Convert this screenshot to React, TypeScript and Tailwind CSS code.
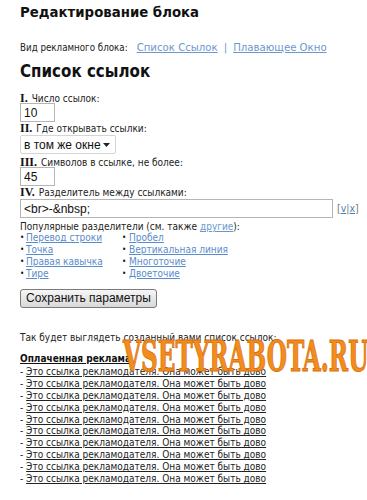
import React from "react";

function Num({ n }: { n: string }) {
  return (
    <b className="font-['Liberation_Serif',serif] text-[12px] leading-[12px] font-bold text-[#111] mr-[4px]">{n}</b>
  );
}

export default function App() {
  const rows = Array.from({ length: 10 });
  const seps: [string, string][] = [
    ["Перевод строки", "Пробел"],
    ["Точка", "Вертикальная линия"],
    ["Правая кавычка", "Многоточие"],
    ["Тире", "Двоеточие"],
  ];
  const label = "h-[12px] leading-[12px] whitespace-nowrap";
  return (
    <div className="relative w-[367px] h-[500px] overflow-hidden bg-white text-[#222] font-['DejaVu_Sans_Condensed',sans-serif] text-[10px] pl-[20px]">
      <h1 className="pt-[2px] text-[14.8px] leading-[20px] font-bold text-[#111]">Редактирование блока</h1>
      <div className="mt-[19px] h-[14px] leading-[14px] flex items-baseline whitespace-nowrap">
        <span className="text-[9.7px]">Вид рекламного блока:</span>
        <a className="ml-[9px] text-[11.3px] text-[#6b98cc] underline">Список Ссылок</a>
        <span className="mx-[6px] text-[11.3px] text-[#6b98cc]">|</span>
        <a className="text-[11.3px] text-[#6b98cc] underline">Плавающее Окно</a>
      </div>
      <h2 className="mt-[5px] h-[22px] text-[16.8px] leading-[22px] font-bold text-[#111]">Список ссылок</h2>

      <div className={"mt-[10px] " + label}><Num n="I." />Число ссылок:</div>
      <div className="mt-[-1px] w-[35px] h-[19px] border border-[#b5b5b5] bg-white flex items-center px-[3px] font-['Liberation_Sans',sans-serif] text-[12px] text-[#111]">10</div>

      <div className={"mt-[0px] " + label}><Num n="II." />Где открывать ссылки:</div>
      <div className="mt-[1px] w-[96px] h-[19px] border border-[#d4d4d4] rounded-[2px] bg-white flex items-center justify-between pl-[3px] pr-[5px] font-['Liberation_Sans',sans-serif] text-[12px] text-[#111] whitespace-nowrap">
        <span>в том же окне</span>
        <svg width="7" height="4" viewBox="0 0 7 4"><path d="M0 0h7L3.5 4z" fill="#222" /></svg>
      </div>

      <div className={"mt-[2px] " + label}><Num n="III." />Символов в ссылке, не более:</div>
      <div className="mt-[-1px] w-[35px] h-[19px] border border-[#b5b5b5] bg-white flex items-center px-[3px] font-['Liberation_Sans',sans-serif] text-[12px] text-[#111]">45</div>

      <div className={"mt-[0px] " + label}><Num n="IV." />Разделитель между ссылками:</div>
      <div className="mt-[1px] flex items-center">
        <div className="w-[313px] h-[19px] border border-[#b5b5b5] bg-white flex items-center px-[3px] font-['Liberation_Sans',sans-serif] text-[12px] text-[#111]">&lt;br&gt;-&amp;nbsp;</div>
        <span className="ml-[4px] text-[10.5px] text-[#777]">[<a className="text-[#4f7fb5] underline">v</a>|<a className="text-[#4f7fb5] underline">x</a>]</span>
      </div>

      <div className={"mt-[3px] " + label}>Популярные разделители (см. также <a className="text-[#6b98cc] underline">другие</a>):</div>
      <div className="mt-[-1px] grid grid-cols-[102px_1fr] leading-[12px]">
        {seps.map(([a, b], i) => (
          <React.Fragment key={i}>
            <div className="flex items-center h-[12px]">
              <span className="w-[6px] text-[8px] text-[#111]">•</span>
              <a className="text-[#5a8ccc] underline">{a}</a>
            </div>
            <div className="flex items-center h-[12px]">
              <span className="w-[7px] text-[8px] text-[#111]">•</span>
              <a className="text-[#5a8ccc] underline">{b}</a>
            </div>
          </React.Fragment>
        ))}
      </div>

      <button className="mt-[9px] block h-[19px] w-[137px] border border-[#7a7a7a] rounded-[3px] bg-gradient-to-b from-[#f6f6f6] to-[#d9d9d9] font-['Liberation_Sans',sans-serif] text-[12px] text-[#111] leading-[17px] whitespace-nowrap">
        Сохранить параметры
      </button>

      <div className={"mt-[24px] " + label}>Так будет выглядеть созданный вами список ссылок:</div>
      <div className={"mt-[9px] font-bold underline text-[#111] " + label}>Оплаченная реклама</div>
      <div className="mt-[1px]">
        {rows.map((_, i) => (
          <div key={i} className="h-[11.9px] leading-[12px] whitespace-nowrap">
            - <a className="underline text-[#222]">Это ссылка рекламодателя. Она может быть дово</a>
          </div>
        ))}
      </div>

      <div className="absolute left-[123px] top-[335px] origin-left scale-x-[0.6] whitespace-nowrap font-['DejaVu_Serif_Condensed',serif] font-bold text-[43px] leading-[43px] text-[#f28c1c] [-webkit-text-stroke:1px_#d9700c] [text-shadow:0_0_1px_#fff3]">
        VSETYRABOTA.RU
      </div>
    </div>
  );
}
